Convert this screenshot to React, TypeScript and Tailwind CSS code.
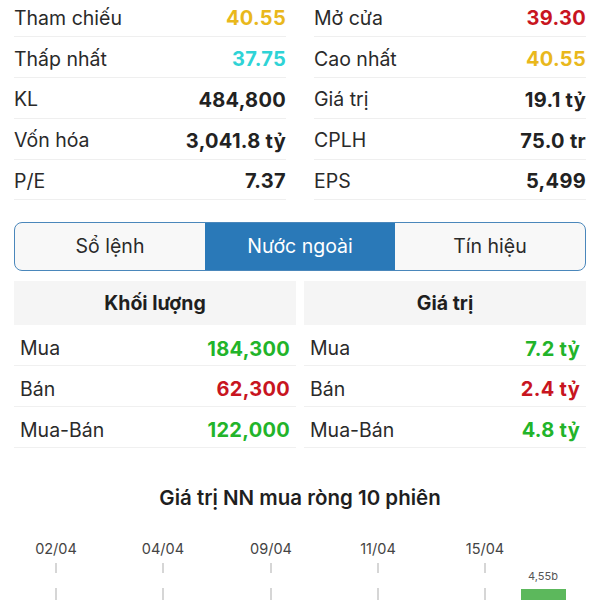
import React from "react";

const font = { fontFamily: "Inter, 'Noto Sans', 'Liberation Sans', sans-serif" };

type Stat = { label: string; value: string; color: string };

const leftStats: Stat[] = [
  { label: "Tham chiếu", value: "40.55", color: "text-[#e9b81c]" },
  { label: "Thấp nhất", value: "37.75", color: "text-[#2fd3d6]" },
  { label: "KL", value: "484,800", color: "text-[#222222]" },
  { label: "Vốn hóa", value: "3,041.8 tỷ", color: "text-[#222222]" },
  { label: "P/E", value: "7.37", color: "text-[#222222]" },
];

const rightStats: Stat[] = [
  { label: "Mở cửa", value: "39.30", color: "text-[#c8151f]" },
  { label: "Cao nhất", value: "40.55", color: "text-[#e9b81c]" },
  { label: "Giá trị", value: "19.1 tỷ", color: "text-[#222222]" },
  { label: "CPLH", value: "75.0 tr", color: "text-[#222222]" },
  { label: "EPS", value: "5,499", color: "text-[#222222]" },
];

const volRows: Stat[] = [
  { label: "Mua", value: "184,300", color: "text-[#22b42a]" },
  { label: "Bán", value: "62,300", color: "text-[#c8151f]" },
  { label: "Mua-Bán", value: "122,000", color: "text-[#22b42a]" },
];

const valRows: Stat[] = [
  { label: "Mua", value: "7.2 tỷ", color: "text-[#22b42a]" },
  { label: "Bán", value: "2.4 tỷ", color: "text-[#c8151f]" },
  { label: "Mua-Bán", value: "4.8 tỷ", color: "text-[#22b42a]" },
];

const StatColumn = ({ items }: { items: Stat[] }) => (
  <div className="flex flex-col">
    {items.map((s) => (
      <div
        key={s.label}
        className="flex h-[40.75px] items-center justify-between border-b border-[#efefef] pt-[4px]"
      >
        <span className="text-[19.5px] text-[#2a2a2a]">{s.label}</span>
        <span className={`text-[20px] font-bold tracking-[0.3px] ${s.color}`}>{s.value}</span>
      </div>
    ))}
  </div>
);

const FlowTable = ({ title, rows }: { title: string; rows: Stat[] }) => (
  <div className="flex flex-col">
    <div className="flex h-[44px] items-center justify-center bg-[#f5f5f5]">
      <span className="text-[19.5px] font-bold text-[#1f1f1f]">{title}</span>
    </div>
    {rows.map((r) => (
      <div
        key={r.label}
        className="flex h-[40.75px] items-center justify-between border-b border-[#f0f0f0] px-[6px] pt-[7px]"
      >
        <span className="text-[19.5px] text-[#2a2a2a]">{r.label}</span>
        <span className={`text-[20px] font-bold tracking-[0.3px] ${r.color}`}>{r.value}</span>
      </div>
    ))}
  </div>
);

const tabs = ["Sổ lệnh", "Nước ngoài", "Tín hiệu"];

const dates = [
  { x: 56, label: "02/04" },
  { x: 163, label: "04/04" },
  { x: 271, label: "09/04" },
  { x: 378, label: "11/04" },
  { x: 485, label: "15/04" },
];

export default function App() {
  return (
    <div className="h-[600px] w-[600px] overflow-hidden bg-white" style={font}>
      {/* Stats */}
      <div className="-mt-[3.5px] grid grid-cols-2 gap-[28px] px-[14px]">
        <StatColumn items={leftStats} />
        <StatColumn items={rightStats} />
      </div>

      {/* Tabs */}
      <div className="mx-[14px] mt-[22px] flex h-[49px] overflow-hidden rounded-[8px] border-[1.5px] border-[#4a87bb] bg-[#f8f8f8]">
        {tabs.map((t, i) => (
          <div
            key={t}
            className={`flex flex-1 items-center justify-center text-[19.5px] ${
              i === 1 ? "bg-[#2a79b8] text-white" : "text-[#2a2a2a]"
            }`}
          >
            {t}
          </div>
        ))}
      </div>

      {/* Foreign flow tables */}
      <div className="mt-[10px] grid grid-cols-2 gap-[8px] px-[14px]">
        <FlowTable title="Khối lượng" rows={volRows} />
        <FlowTable title="Giá trị" rows={valRows} />
      </div>

      {/* Chart */}
      <div className="mt-[35px] flex justify-center">
        <span className="text-[20.5px] font-semibold text-[#1f1f1f]">
          Giá trị NN mua ròng 10 phiên
        </span>
      </div>
      <svg width="600" height="80" className="mt-[25px] block">
        {dates.map((d) => (
          <g key={d.label}>
            <text
              x={d.x}
              y={16}
              textAnchor="middle"
              fontSize="14.5"
              fill="#444"
              style={font}
            >
              {d.label}
            </text>
            <line x1={d.x} y1={25} x2={d.x} y2={35} stroke="#bbb" strokeWidth="1.2" />
            <line x1={d.x} y1={50} x2={d.x} y2={75} stroke="#bbb" strokeWidth="1.2" />
          </g>
        ))}
        <text x={543} y={42} textAnchor="middle" fontSize="11" fill="#555" style={font}>
          4,55b
        </text>
        <rect x={521} y={51} width={45} height={40} fill="#5cb85c" />
      </svg>
    </div>
  );
}
